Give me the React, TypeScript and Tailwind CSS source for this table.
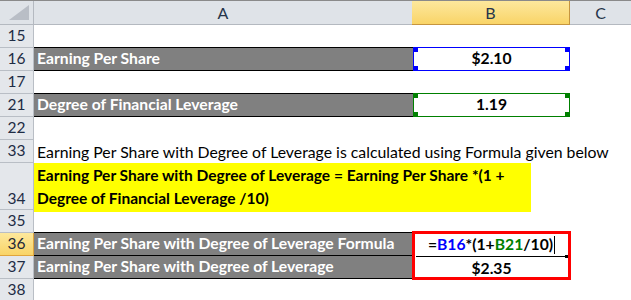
import React from 'react'

const font = "font-['Lato','Open_Sans',sans-serif]"

function RowHead({ n, row, active = false, bottom = false }: { n: number; row: number; active?: boolean; bottom?: boolean }) {
  return (
    <div
      style={{ gridRow: row }}
      className={`col-start-1 flex justify-center border-r border-b text-[15.5px] leading-none ${bottom ? 'items-end pb-[3px]' : 'items-center'} ${
        active ? 'bg-gradient-to-b from-[#fde89c] to-[#f9d467] border-[#e0a53c] text-[#1d2738]' : 'bg-[#e4e7eb] border-[#b9bec5] text-[#1e2c44]'
      }`}
    >
      {n}
    </div>
  )
}

function Handles({ color }: { color: string }) {
  return (
    <>
      <span className={`absolute -left-px -top-px w-[5px] h-[5px] ${color}`} />
      <span className={`absolute -right-px -top-px w-[5px] h-[5px] ${color}`} />
      <span className={`absolute -left-px -bottom-px w-[5px] h-[5px] ${color}`} />
      <span className={`absolute -right-px -bottom-px w-[5px] h-[5px] ${color}`} />
    </>
  )
}

function GrayCell({ row, text }: { row: number; text: string }) {
  return (
    <div
      style={{ gridRow: row }}
      className="col-start-2 -mt-px h-[24px] bg-[#808080] border-y border-black flex items-center pl-[3px] text-white font-bold text-[15.7px] whitespace-nowrap overflow-hidden"
    >
      {text}
    </div>
  )
}

export default function App() {
  return (
    <div className={`w-[631px] h-[300px] overflow-hidden bg-white border-t border-[#8a8a8a] ${font}`}>
      <div className="grid grid-cols-[34px_379px_157px_61px] grid-rows-[24px_23px_23px_23px_23px_23px_23px_47px_23px_23px_23px_23px]">
        {/* header */}
        <div className="row-start-1 col-start-1 bg-[#dfe3e8] border-r border-b border-[#b4b9c0] relative">
          <svg className="absolute right-[4px] bottom-[4px]" width="20" height="15" viewBox="0 0 20 15">
            <polygon points="20,0 20,15 0,15" fill="#b9bec6" />
          </svg>
        </div>
        <div className="row-start-1 col-start-2 bg-[#dfe3e8] border-r border-b border-[#b4b9c0] flex items-center justify-center text-[16px] text-[#26344a]">A</div>
        <div className="row-start-1 col-start-3 bg-gradient-to-b from-[#fde89c] to-[#f9d467] border-r border-b border-[#c6953f] flex items-center justify-center text-[16px] text-[#26344a] -ml-px">B</div>
        <div className="row-start-1 col-start-4 bg-[#dfe3e8] border-b border-[#b4b9c0] flex items-center justify-center text-[16px] text-[#26344a]">C</div>

        <RowHead n={15} row={2} />
        <RowHead n={16} row={3} />
        <RowHead n={17} row={4} />
        <RowHead n={21} row={5} />
        <RowHead n={22} row={6} />
        <RowHead n={33} row={7} />
        <RowHead n={34} row={8} bottom />
        <RowHead n={35} row={9} />
        <RowHead n={36} row={10} active />
        <RowHead n={37} row={11} />
        <RowHead n={38} row={12} />

        {/* row 16 */}
        <GrayCell row={3} text="Earning Per Share" />
        <div className="row-start-3 col-start-3 -mt-px h-[24px] border border-[#0000ff] relative flex items-center justify-center font-bold text-[15.7px] text-black">
          $2.10
          <Handles color="bg-[#0000ff]" />
        </div>

        {/* row 21 */}
        <GrayCell row={5} text="Degree of Financial Leverage" />
        <div className="row-start-5 col-start-3 -mt-px h-[24px] border border-[#008000] relative flex items-center justify-center font-bold text-[15.7px] text-black">
          1.19
          <Handles color="bg-[#008000]" />
        </div>

        {/* row 33 */}
        <div className="row-start-7 col-start-2 col-span-3 flex items-center pl-[3px] text-[15.8px] text-black whitespace-nowrap overflow-visible">
          Earning Per Share with Degree of Leverage is calculated using Formula given below
        </div>

        {/* row 34 */}
        <div className="row-start-8 col-start-2 col-span-2 w-[497px] h-[49px] bg-[#ffff00] flex flex-col pl-[3px] pt-[1px] font-bold text-[15.5px] text-black leading-[23px] whitespace-nowrap">
          <span>Earning Per Share with Degree of Leverage = Earning Per Share *(1 +</span>
          <span>Degree of Financial Leverage /10)</span>
        </div>

        {/* rows 36-37 */}
        <GrayCell row={10} text="Earning Per Share with Degree of Leverage Formula" />
        <GrayCell row={11} text="Earning Per Share with Degree of Leverage" />
        <div className="row-start-10 row-span-2 col-start-3 -ml-px -mt-[2px] w-[159px] h-[49px] border-[3px] border-[#ff0000] bg-white flex flex-col font-bold text-[15.7px] text-black">
          <div className="h-[23px] flex items-center justify-center relative border-b border-black mx-[1px]">
            <span>=</span>
            <span className="text-[#0000ff]">B16</span>
            <span>*(1+</span>
            <span className="text-[#008000]">B21</span>
            <span>/10)</span>
            <span className="ml-[1px] w-px h-[18px] bg-black" />
            <span className="absolute -right-[1px] -bottom-[2px] w-[3px] h-[3px] bg-black" />
          </div>
          <div className="flex-1 flex items-center justify-center">$2.35</div>
        </div>
      </div>
    </div>
  )
}
